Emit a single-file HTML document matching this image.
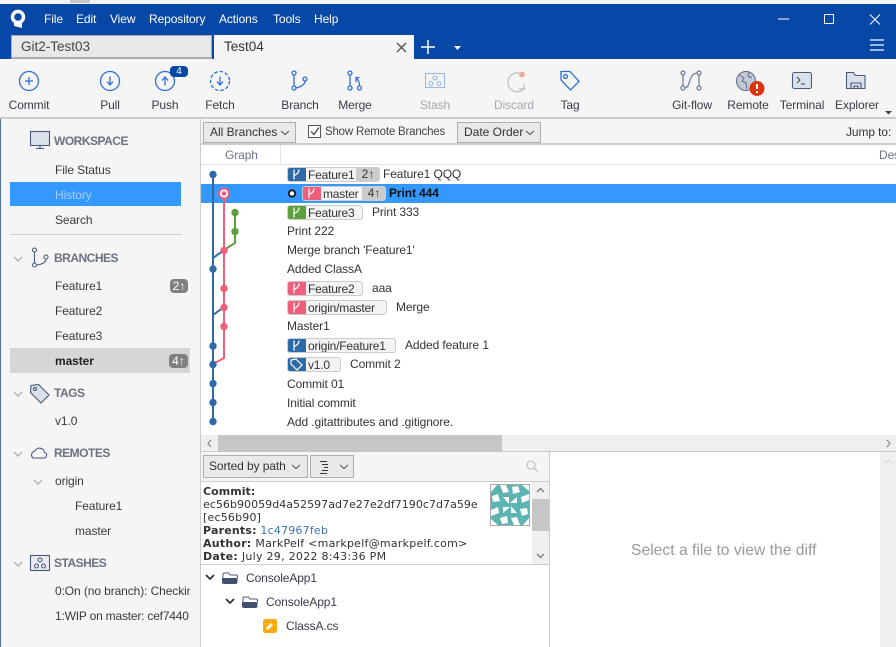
<!DOCTYPE html>
<html><head><meta charset="utf-8"><style>
html,body{margin:0;padding:0;background:#fff}
#r{position:relative;width:896px;height:647px;overflow:hidden;background:#fff;font-family:"Liberation Sans",sans-serif;font-size:12px;color:#333}
.b{position:absolute;box-sizing:border-box}
.t{position:absolute;white-space:nowrap;line-height:16px;height:16px;letter-spacing:-.1px}
.m{color:#fff;top:11px}
.l{top:97px;transform:translateX(-50%);color:#3a3a4a}
.s{color:#3a3a3a;left:55px}
.h{color:#6b7280;font-weight:bold;left:54px;font-size:12px;letter-spacing:-.5px}
.g{color:#333;left:287px}
.p{position:absolute;box-sizing:border-box;height:15px;background:#f3f3f3;border:1px solid #ccc;border-radius:3px;font-size:12px;line-height:14px;color:#333;white-space:nowrap;overflow:hidden}
.p i{position:absolute;left:-1px;top:-1px;height:15px;width:19px;border-radius:3px 0 0 3px}
.p span{position:absolute;left:20px;top:0;letter-spacing:-.2px}
.p em{position:absolute;right:-1px;top:-1px;height:15px;width:24px;background:#ccc;font-style:normal;text-align:center;line-height:14px}
.d{font-family:"DejaVu Sans",sans-serif;font-size:11px;letter-spacing:.04px;line-height:13px;height:13px;color:#333;position:absolute;white-space:nowrap;left:203px}
.btn{position:absolute;box-sizing:border-box;background:#e9e9e9;border:1px solid #adadad;color:#333;line-height:19px;padding-left:6px;height:21px;white-space:nowrap}
svg{position:absolute;overflow:visible}
.i{fill:none;stroke:#2f6fd8;stroke-width:1.3}
</style></head><body><div id="r">

<div class="b" style="left:0;top:0;width:896px;height:4px;background:#f4f4f4"></div>
<div class="b" style="left:70px;top:0;width:20px;height:3px;background:#c8c8c8"></div>
<div class="b" style="left:0;top:4px;width:896px;height:55px;background:#0747a6"></div>
<svg style="left:0;top:0" width="896" height="60">
<circle cx="18" cy="17" r="5.500" fill="none" stroke="#fff" stroke-width="3.400"/>
<path d="M14 23 L22 23 L22 28 L14 26Z" fill="#fff"/>
<path d="M778 19h11" stroke="#fff" stroke-width="1"/>
<rect x="824.500" y="14.500" width="9" height="9" fill="none" stroke="#fff" stroke-width="1"/>
<path d="M870 14.500l10 10M880 14.500l-10 10" stroke="#fff" stroke-width="1"/>
<path d="M870 40h14M870 45h14M870 50h14" stroke="#9db8e0" stroke-width="2"/>
<path d="M421 47h14M428 40v14" stroke="#fff" stroke-width="1.500"/>
<path d="M454 46h7l-3.500 4z" fill="#fff"/>
</svg>
<span class="t m" style="left:44px">File</span>
<span class="t m" style="left:76px">Edit</span>
<span class="t m" style="left:110px">View</span>
<span class="t m" style="left:149px">Repository</span>
<span class="t m" style="left:219px">Actions</span>
<span class="t m" style="left:273px">Tools</span>
<span class="t m" style="left:314px">Help</span>
<div class="b" style="left:11px;top:35px;width:201px;height:24px;background:#e8e8e8;border:1px solid #aaa;border-bottom:2px solid #aaa"></div>
<span class="t" style="left:21px;top:39px;font-size:13.500px;color:#444;letter-spacing:0">Git2-Test03</span>
<div class="b" style="left:214px;top:35px;width:200px;height:24px;background:#f5f5f5"></div>
<span class="t" style="left:224px;top:39px;font-size:13.500px;color:#333;letter-spacing:0">Test04</span>
<svg style="left:0;top:0;z-index:3" width="1" height="1"><path d="M397 43l9 9M406 43l-9 9" stroke="#555" stroke-width="1.400"/></svg>

<div class="b" style="left:0;top:59px;width:896px;height:60px;background:#f5f5f5;border-bottom:2px solid #ccc"></div>
<svg style="left:0;top:0" width="896" height="119">
<g class="i">
<circle cx="29" cy="81" r="9.500"/><path d="M25 81h8M29 77v8"/>
<circle cx="110" cy="81" r="9.500"/><path d="M110 76.500v8M107 81.500l3 3.500 3-3.500"/>
<circle cx="165" cy="81" r="9.500"/><path d="M165 85.500v-8M162 80.500l3-3.500 3 3.500"/>
<circle cx="220" cy="81" r="9.500" stroke-dasharray="3.500 2"/><path d="M220 76.500v8M217 81.500l3 3.500 3-3.500"/>
<circle cx="294" cy="73" r="2"/><circle cx="294" cy="88" r="2"/><circle cx="305" cy="79" r="2"/><path d="M294 75v11M305 81c0 4-5 6-9 7"/>
<circle cx="350" cy="73" r="2"/><circle cx="350" cy="88" r="2"/><circle cx="359.500" cy="88" r="2"/><path d="M350 75v11M359.500 86c0-4-1-6-3-8M356 82v-4.500h3.500"/>
<path d="M561 71.500h9l9 10-8.500 8.500-9.500-10z"/><circle cx="565.500" cy="76.500" r="2"/>
</g>
<g fill="none" stroke="#9db7e3" stroke-width="1.100"><rect x="425.500" y="73.500" width="19" height="14"/><circle cx="435" cy="78" r="2"/><circle cx="431" cy="83.500" r="2"/><circle cx="439" cy="83.500" r="2"/></g>
<path d="M522 74a9.500 9.500 0 1 0 3 14M524 84v5h-5" fill="none" stroke="#b8bfc9" stroke-width="1.200"/>
<circle cx="522" cy="74.500" r="2.800" fill="#f4a594"/>
<g fill="none" stroke="#6b7a93" stroke-width="1.200">
<circle cx="683" cy="73" r="2"/><circle cx="683" cy="88" r="2"/><circle cx="699" cy="73" r="2"/><circle cx="699" cy="88" r="2"/>
<path d="M683 75v11M699 75v11M685 88c6-1 3-14 12-15"/>
</g>
<circle cx="746" cy="81" r="9.500" fill="#c3cad6" stroke="#5b6a85" stroke-width="1"/>
<path d="M739 75l5 3-2 3 4 2 1 6M749 72l-1 4 4 2" fill="none" stroke="#5b6a85" stroke-width="1"/>
<circle cx="757" cy="88.500" r="7.500" fill="#dd3311"/>
<path d="M757 84v5" stroke="#fff" stroke-width="2"/><circle cx="757" cy="92" r="1.100" fill="#fff"/>
<rect x="792.500" y="72.500" width="19" height="16" rx="2" fill="#dbe1ea" stroke="#4b5a78" stroke-width="1.100"/>
<path d="M797 77l3 3-3 3M801 84h4" fill="none" stroke="#33415c" stroke-width="1"/>
<path d="M846.500 88.500v-16h7l2 3h9.500v13z" fill="#dbe1ea" stroke="#4b5a78" stroke-width="1.100"/>
<path d="M851 89v-6h10v6M854 89v-3h4v3" fill="none" stroke="#4b5a78" stroke-width="1.100"/>
<path d="M885 111h7l-3.500 3.500z" fill="#444"/>
</svg>
<div class="b" style="left:170px;top:66px;width:18px;height:11px;background:#0747a6;border-radius:4px;color:#fff;font-size:10px;line-height:11px;text-align:center">4</div>
<span class="t l" style="left:29px">Commit</span>
<span class="t l" style="left:110px">Pull</span>
<span class="t l" style="left:165px">Push</span>
<span class="t l" style="left:220px">Fetch</span>
<span class="t l" style="left:300px">Branch</span>
<span class="t l" style="left:355px">Merge</span>
<span class="t l" style="left:435px;color:#a4a8ae">Stash</span>
<span class="t l" style="left:514px;color:#a4a8ae">Discard</span>
<span class="t l" style="left:570px">Tag</span>
<span class="t l" style="left:692px">Git-flow</span>
<span class="t l" style="left:748px">Remote</span>
<span class="t l" style="left:802px">Terminal</span>
<span class="t l" style="left:857px">Explorer</span>

<!-- sidebar -->
<div class="b" style="left:0;top:119px;width:201px;height:528px;background:#f5f5f5;border-left:1px solid #4f7396;border-right:1px solid #ccc"></div>
<svg style="left:0;top:0" width="200" height="647">
<g fill="none" stroke="#4b5a78" stroke-width="1.100">
<rect x="30.500" y="131.500" width="19" height="14" fill="#dbe1ea"/><path d="M36 148.500h8M40 146v2"/>
<circle cx="34.500" cy="250" r="2"/><circle cx="34.500" cy="265" r="2"/><circle cx="46" cy="257" r="2"/><path d="M34.500 252v11M46 259c0 4-6 6-9.500 6"/>
<path d="M31 385.500l-.5 7 10.500 10.500 8-8-10.500-10.500z" fill="#dbe1ea"/><circle cx="35" cy="389" r="1.500"/>
<path d="M34 457.500h11a2.800 2.800 0 0 0 .5-5.500 5 5 0 0 0-9.500-1.500 4 4 0 0 0-2 7z" fill="#f5f5f5" transform="translate(-1 .5)"/>
<rect x="30.500" y="555.500" width="19" height="15" fill="#e8ebf0"/><circle cx="40" cy="560" r="2"/><circle cx="36.500" cy="566" r="2"/><circle cx="43.500" cy="566" r="2"/>
</g>
<g fill="none" stroke="#b5b5b5" stroke-width="1.500">
<path d="M14 257l4 4 4-4M14 392l4 4 4-4M14 452l4 4 4-4M14 562l4 4 4-4M34 480l4 4 4-4"/>
</g>
<path d="M10 234.500h172" stroke="#ccc"/>
<circle cx="39" cy="361" r="3.200" fill="none" stroke="#4b5a78" stroke-width="2"/>
</svg>
<span class="t h" style="top:133px">WORKSPACE</span>
<span class="t s" style="top:162px">File Status</span>
<div class="b" style="left:10px;top:182px;width:171px;height:24px;background:#3399ff"></div>
<span class="t s" style="top:187px;color:#a9cdf0">History</span>
<span class="t s" style="top:212px">Search</span>
<span class="t h" style="top:250px">BRANCHES</span>
<span class="t s" style="top:278px">Feature1</span>
<span class="t s" style="top:303px">Feature2</span>
<span class="t s" style="top:328px">Feature3</span>
<div class="b" style="left:10px;top:348px;width:180px;height:25px;background:#d6d6d6"></div>
<span class="t s" style="top:353px;font-weight:bold;color:#222">master</span>
<div class="b" style="left:170px;top:279px;width:18px;height:14px;border-radius:4px;background:#808080;color:#fff;line-height:14px;text-align:center">2↑</div>
<div class="b" style="left:169px;top:354px;width:19px;height:14px;border-radius:4px;background:#808080;color:#fff;line-height:14px;text-align:center">4↑</div>
<span class="t h" style="top:385px">TAGS</span>
<span class="t s" style="top:413px">v1.0</span>
<span class="t h" style="top:445px">REMOTES</span>
<span class="t s" style="top:473px">origin</span>
<span class="t s" style="top:498px;left:75px">Feature1</span>
<span class="t s" style="top:523px;left:75px">master</span>
<span class="t h" style="top:555px">STASHES</span>
<div class="b" style="left:10px;top:583px;width:180px;height:16px;overflow:hidden"><span class="t s" style="top:0;left:45px">0:On (no branch): Checking</span></div>
<span class="t s" style="top:608px;letter-spacing:-.2px">1:WIP on master: cef7440</span>

<!-- filter bar -->
<div class="b" style="left:201px;top:119px;width:695px;height:26px;background:#f5f5f5;border-bottom:2px solid #ccc"></div>
<div class="btn" style="left:203px;top:122px;width:93px">All Branches</div>
<div class="btn" style="left:457px;top:122px;width:84px">Date Order</div>
<svg style="left:0;top:0" width="896" height="145">
<path d="M281 131l4 3.500 4-3.500" fill="none" stroke="#555" stroke-width="1.100"/>
<rect x="308.500" y="125.500" width="12" height="12" fill="#fff" stroke="#555"/>
<path d="M311 131.500l3 3 5-7" fill="none" stroke="#333" stroke-width="1.100"/>
<path d="M526 131l4 3.500 4-3.500" fill="none" stroke="#555" stroke-width="1.100"/>
</svg>
<span class="t" style="left:325px;top:124px;color:#444;font-size:11.500px;letter-spacing:-.2px">Show Remote Branches</span>
<span class="t" style="left:846px;top:124px">Jump to:</span>

<!-- graph -->
<div class="b" style="left:201px;top:145px;width:695px;height:20px;background:#fff;border-bottom:1px solid #e3e3e3"></div>
<div class="b" style="left:280px;top:145px;width:1px;height:20px;background:#e3e3e3"></div>
<span class="t" style="left:225px;top:147px;color:#6b7280">Graph</span>
<span class="t" style="left:879px;top:147px;color:#6b7280">Description</span>
<div class="b" style="left:201px;top:184px;width:695px;height:19px;background:#3399ff"></div>
<svg style="left:0;top:0" width="300" height="440">
<g fill="none" stroke-width="2">
<path d="M213 174V421" stroke="#2f6aa8"/>
<path d="M224 193V358L213 364" stroke="#ef5f7a"/>
<path d="M235 212V243L224 250" stroke="#5da13e"/>
<path d="M213 258L224 250M213 315L224 307" stroke="#2f6aa8"/>
</g>
<g fill="#2f6aa8"><circle cx="213" cy="174.500" r="3.700"/><circle cx="213" cy="269" r="3.700"/><circle cx="213" cy="346" r="3.700"/><circle cx="213" cy="364.500" r="3.700"/><circle cx="213" cy="383.500" r="3.700"/><circle cx="213" cy="402.500" r="3.700"/><circle cx="213" cy="421.500" r="3.700"/></g>
<g fill="#ef5f7a"><circle cx="224" cy="250.500" r="3.700"/><circle cx="224" cy="288.500" r="3.700"/><circle cx="224" cy="307.500" r="3.700"/><circle cx="224" cy="326.500" r="3.700"/></g>
<g fill="#5da13e"><circle cx="235" cy="212.500" r="3.700"/><circle cx="235" cy="231.500" r="3.700"/></g>
<circle cx="224" cy="193.500" r="5" fill="#fff" stroke="#ef5f7a" stroke-width="2"/>
<circle cx="224" cy="193.500" r="2.300" fill="#ef5f7a"/>
</svg>

<div class="p" style="left:287px;top:167px;width:93px;background:#f5f5f5"><i style="background:#2f6aa8"></i><span>Feature1</span><em>2↑</em></div>
<span class="t g" style="left:383px;top:166px">Feature1 QQQ</span>
<svg style="left:0;top:0" width="1" height="1"><circle cx="292" cy="193.500" r="3.200" fill="#fff" stroke="#222" stroke-width="2"/></svg>
<div class="p" style="left:302px;top:186px;width:84px;background:#f5f5f5"><i style="background:#ef5f7a"></i><span>master</span><em>4↑</em></div>
<span class="t g" style="left:389px;top:185px;font-weight:bold;color:#111">Print 444</span>
<div class="p" style="left:287px;top:205px;width:76px"><i style="background:#5da13e"></i><span>Feature3</span></div>
<span class="t g" style="left:372px;top:204px">Print 333</span>
<span class="t g" style="top:223px">Print 222</span>
<span class="t g" style="top:242px">Merge branch 'Feature1'</span>
<span class="t g" style="top:261px">Added ClassA</span>
<div class="p" style="left:287px;top:281px;width:76px"><i style="background:#ef5f7a"></i><span>Feature2</span></div>
<span class="t g" style="left:372px;top:280px">aaa</span>
<div class="p" style="left:287px;top:300px;width:100px"><i style="background:#ef5f7a"></i><span>origin/master</span></div>
<span class="t g" style="left:396px;top:299px">Merge</span>
<span class="t g" style="top:318px">Master1</span>
<div class="p" style="left:287px;top:338px;width:109px"><i style="background:#2f6aa8"></i><span>origin/Feature1</span></div>
<span class="t g" style="left:405px;top:337px">Added feature 1</span>
<div class="p" style="left:287px;top:357px;width:54px"><i style="background:#2f6aa8"></i><span>v1.0</span></div>
<span class="t g" style="left:350px;top:356px">Commit 2</span>
<span class="t g" style="top:376px">Commit 01</span>
<span class="t g" style="top:395px">Initial commit</span>
<span class="t g" style="top:414px">Add .gitattributes and .gitignore.</span>
<svg style="left:0;top:0" width="320" height="370">
<g fill="none" stroke="#fff" stroke-width="1.200">
<path d="M294 169.500v10M299 169.500c0 4-3 5-5 6"/>
<path d="M309 188.500v10M314 188.500c0 4-3 5-5 6"/>
<path d="M294 207.500v10M299 207.500c0 4-3 5-5 6"/>
<path d="M294 283.500v10M299 283.500c0 4-3 5-5 6"/>
<path d="M294 302.500v10M299 302.500c0 4-3 5-5 6"/>
<path d="M294 340.500v10M299 340.500c0 4-3 5-5 6"/>
<path d="M291 360v4l6 6 5-5-6-6z"/>
</g>
</svg>

<!-- h scroll -->
<div class="b" style="left:201px;top:435px;width:695px;height:17px;background:#efefef;border-bottom:1px solid #ccc"></div>
<div class="b" style="left:218px;top:435px;width:284px;height:17px;background:#c6c6c6"></div>
<svg style="left:0;top:0" width="896" height="647">
<path d="M211 440l-3 3.500 3 3.500M887 440l3 3.500-3 3.500" fill="none" stroke="#888" stroke-width="1.200"/>
</svg>

<!-- lower panel -->
<div class="b" style="left:201px;top:452px;width:349px;height:30px;background:#f5f5f5;border-bottom:1px solid #ccc;border-right:1px solid #ccc"></div>
<div class="btn" style="left:203px;top:455px;width:105px;height:23px;line-height:21px;padding-left:5px;font-size:12px;letter-spacing:-.1px">Sorted by path</div>
<div class="btn" style="left:310px;top:455px;width:44px;height:23px"></div>
<svg style="left:0;top:0" width="560" height="647">
<path d="M292 465l4 3.500 4-3.500M340 465l4 3.500 4-3.500" fill="none" stroke="#555" stroke-width="1.100"/>
<path d="M320 461.500h7M322 464.500h6M324 467.500h4M322 470.500h6M320 473.500h7" stroke="#333" fill="none"/>
<circle cx="531" cy="465" r="4" fill="none" stroke="#c4c4c4" stroke-width="1.300"/><path d="M534 468l3.500 3.500" stroke="#c4c4c4" stroke-width="1.500"/>
</svg>
<div class="b" style="left:201px;top:482px;width:349px;height:83px;background:#fff;border-bottom:1px solid #ccc;border-right:1px solid #ccc"></div>
<div class="d" style="top:485px;font-weight:bold">Commit:</div>
<div class="d" style="top:498px;letter-spacing:.04px">ec56b90059d4a52597ad7e27e2df7190c7d7a59e</div>
<div class="d" style="top:511px;letter-spacing:.2px">[ec56b90]</div>
<div class="d" style="top:524px;letter-spacing:.2px"><b>Parents:</b> <span style="color:#3f72b5">1c47967feb</span></div>
<div class="d" style="top:537px;letter-spacing:.25px"><b>Author:</b> MarkPelf &lt;markpelf@markpelf.com&gt;</div>
<div class="d" style="top:550px;letter-spacing:.28px"><b>Date:</b> July 29, 2022 8:43:36 PM</div>
<svg style="left:490px;top:484px" width="40" height="42" viewBox="0 0 40 42">
<rect x=".5" y=".5" width="39" height="41" fill="#5cb5b3" stroke="#a8a8a8"/>
<defs><g id="q" fill="#fff"><path d="M1 1h6l-6 7zM10 1h6l3 7-6 1zM2 12l6-2 2 7-7 1zM13 13l6 0 0 7z"/></g></defs>
<use href="#q"/>
<use href="#q" transform="rotate(90 20 21) translate(-1 1)"/>
<use href="#q" transform="rotate(180 20 21)"/>
<use href="#q" transform="rotate(270 20 21) translate(-1 1)"/>
</svg>
<div class="b" style="left:532px;top:482px;width:17px;height:82px;background:#f0f0f0"></div>
<div class="b" style="left:532px;top:499px;width:17px;height:32px;background:#c6c6c6"></div>
<svg style="left:0;top:0" width="560" height="647">
<path d="M537 492l3.500-3.500 3.500 3.500M537 554l3.500 3.500 3.500-3.500" fill="none" stroke="#666" stroke-width="1.100"/>
<path d="M206 575l4 4 4-4M226 599l4 4 4-4" fill="none" stroke="#333" stroke-width="1.800"/>
<path d="M223 578v-3.500a1.500 1.500 0 0 1 1.500-1.500h4l1.500 2h6a1.500 1.500 0 0 1 1.500 1.500v1.500" fill="none" stroke="#4b5a78" stroke-width="1"/>
<path d="M222 578h15.500v4a2 2 0 0 1-2 2h-11.500a2 2 0 0 1-2-2z" fill="#41506e"/>
<path d="M243 602v-3.500a1.500 1.500 0 0 1 1.500-1.500h4l1.500 2h6a1.500 1.500 0 0 1 1.500 1.500v1.500" fill="none" stroke="#4b5a78" stroke-width="1"/>
<path d="M242 602h15.500v4a2 2 0 0 1-2 2h-11.500a2 2 0 0 1-2-2z" fill="#41506e"/>
<rect x="263" y="619" width="14" height="14" rx="2.500" fill="#fbab0e"/>
<path d="M267 629l5-5" stroke="#fff" stroke-width="3"/>
</svg>
<span class="t" style="left:246px;top:570px;color:#3a3a4a">ConsoleApp1</span>
<span class="t" style="left:266px;top:594px;color:#3a3a4a">ConsoleApp1</span>
<span class="t" style="left:286px;top:618px;color:#3a3a4a">ClassA.cs</span>
<div class="b" style="left:549px;top:565px;width:1px;height:82px;background:#ccc"></div>
<div class="b" style="left:200px;top:565px;width:1px;height:82px;background:#ccc"></div>
<div class="b" style="left:880px;top:452px;width:16px;height:195px;background:#f0f0f0"></div>
<svg style="left:0;top:0" width="896" height="647"><path d="M885 463l3.500-3 3.500 3" fill="none" stroke="#d4d4d4" stroke-width="1.100"/></svg>
<span class="t" style="left:631px;top:543px;font-size:15.700px;color:#9a9a9a;letter-spacing:0">Select a file to view the diff</span>
</div></body></html>
